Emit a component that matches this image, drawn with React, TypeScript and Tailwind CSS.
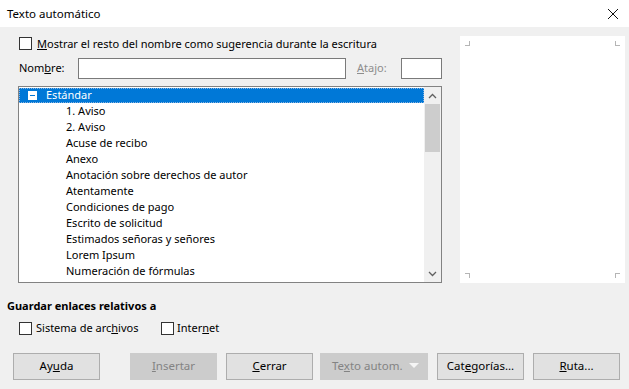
import React from "react";

const items = [
  "1. Aviso",
  "2. Aviso",
  "Acuse de recibo",
  "Anexo",
  "Anotación sobre derechos de autor",
  "Atentamente",
  "Condiciones de pago",
  "Escrito de solicitud",
  "Estimados señoras y señores",
  "Lorem Ipsum",
  "Numeración de fórmulas",
];

const Check = () => (
  <span className="inline-block w-[13px] h-[13px] border border-[#333] bg-white shrink-0" />
);

const Btn = ({ children, disabled, w = "w-[87px]" }: { children: React.ReactNode; disabled?: boolean; w?: string }) => (
  <div
    className={`${w} h-[27px] flex items-center justify-center border text-[11.5px] shrink-0 ${
      disabled ? "border-[#cccccc] bg-[#cccccc] text-[#838383]" : "border-[#adadad] bg-[#e1e1e1] text-black"
    }`}
  >
    {children}
  </div>
);

const Corner = ({ className }: { className: string }) => (
  <span className={`absolute w-[5px] h-[5px] border-[#b5b5b5] ${className}`} />
);

export default function App() {
  return (
    <div className="w-[629px] h-[389px] bg-[#f0f0f0] flex flex-col text-black text-[11px]" style={{ fontFamily: '"Noto Sans", sans-serif' }}>
      {/* title bar */}
      <div className="h-[27px] bg-white flex items-center justify-between pl-[7px] pr-[8px] shrink-0">
        <span className="text-[11.5px]">Texto automático</span>
        <svg width="12" height="12" viewBox="0 0 12 12" className="mr-[2px]">
          <path d="M1 1L11 11M11 1L1 11" stroke="#111" strokeWidth="1" />
        </svg>
      </div>

      <div className="flex pl-[18px] pr-[4px] pt-[9px] gap-[18px]">
        {/* left column */}
        <div className="w-[424px] flex flex-col">
          <div className="flex items-center gap-[5px] h-[14px] ml-[1px]">
            <Check />
            <span className="leading-none">
              <span className="underline">M</span>ostrar el resto del nombre como sugerencia durante la escritura
            </span>
          </div>
          <div className="flex items-center mt-[8px] h-[21px]">
            <span className="w-[59px] ml-[1px]">
              Nom<span className="underline">b</span>re:
            </span>
            <div className="w-[268px] h-[21px] bg-white border border-[#7a7a7a]" />
            <span className="text-[#8d8d8d] ml-[11px] w-[44px]">
              <span className="underline">A</span>tajo:
            </span>
            <div className="w-[41px] h-[21px] bg-white border border-[#7a7a7a]" />
          </div>
          {/* list */}
          <div className="mt-[7px] h-[197px] bg-white border border-[#828282] flex">
            <div className="flex-1 flex flex-col pt-[1px]">
              <div className="h-[15px] bg-[#0078d7] border border-dotted border-[#8ab4e0] flex items-center text-white">
                <span className="ml-[8px] w-[9px] h-[9px] bg-white flex items-center justify-center">
                  <span className="w-[5px] h-[1px] bg-[#0078d7]" />
                </span>
                <span className="ml-[9px]">Estándar</span>
              </div>
              {items.map((t) => (
                <div key={t} className="h-[16px] flex items-center pl-[47px]">
                  {t}
                </div>
              ))}
            </div>
            <div className="w-[17px] flex flex-col bg-[#f0f0f0]">
              <div className="h-[17px] flex items-center justify-center">
                <svg width="9" height="6" viewBox="0 0 9 6">
                  <path d="M1 5L4.5 1.5L8 5" stroke="#606060" strokeWidth="1.3" fill="none" />
                </svg>
              </div>
              <div className="h-[48px] mx-[1px] bg-[#cdcdcd]" />
              <div className="flex-1" />
              <div className="h-[17px] flex items-center justify-center">
                <svg width="9" height="6" viewBox="0 0 9 6">
                  <path d="M1 1L4.5 4.5L8 1" stroke="#606060" strokeWidth="1.3" fill="none" />
                </svg>
              </div>
            </div>
          </div>
        </div>
        {/* preview */}
        <div className="relative w-[165px] h-[247px] bg-white">
          <Corner className="top-[5px] left-[5px] border-r border-b" />
          <Corner className="top-[5px] right-[5px] border-l border-b" />
          <Corner className="bottom-[5px] left-[5px] border-r border-t" />
          <Corner className="bottom-[5px] right-[5px] border-l border-t" />
        </div>
      </div>

      <div className="pl-[7px] mt-[15px] font-bold">Guardar enlaces relativos a</div>
      <div className="flex items-center pl-[19px] mt-[7px] h-[14px]">
        <Check />
        <span className="ml-[4px] w-[125px]">
          Sistema de arc<span className="underline">h</span>ivos
        </span>
        <Check />
        <span className="ml-[3px]">
          Inter<span className="underline">n</span>et
        </span>
      </div>

      <div className="flex items-center pl-[13px] mt-[17px]">
        <Btn>
          Ay<span className="underline">u</span>da
        </Btn>
        <div className="w-[30px] shrink-0" />
        <Btn disabled>
          <span className="underline">I</span>nsertar
        </Btn>
        <div className="w-[9px] shrink-0" />
        <Btn>
          <span className="underline">C</span>errar
        </Btn>
        <div className="w-[7px] shrink-0" />
        <Btn disabled w="w-[108px]">
          <span className="flex items-center w-full pl-[11px] pr-[8px] justify-between">
            <span>
              Te<span className="underline">x</span>to autom.
            </span>
            <svg width="10" height="6" viewBox="0 0 10 6">
              <path d="M0 0H10L5 5Z" fill="#f5f5f5" />
            </svg>
          </span>
        </Btn>
        <div className="w-[9px] shrink-0" />
        <Btn>
          Cat<span className="underline">e</span>gorías...
        </Btn>
        <div className="w-[9px] shrink-0" />
        <Btn>
          <span className="underline">R</span>uta...
        </Btn>
      </div>
    </div>
  );
}
